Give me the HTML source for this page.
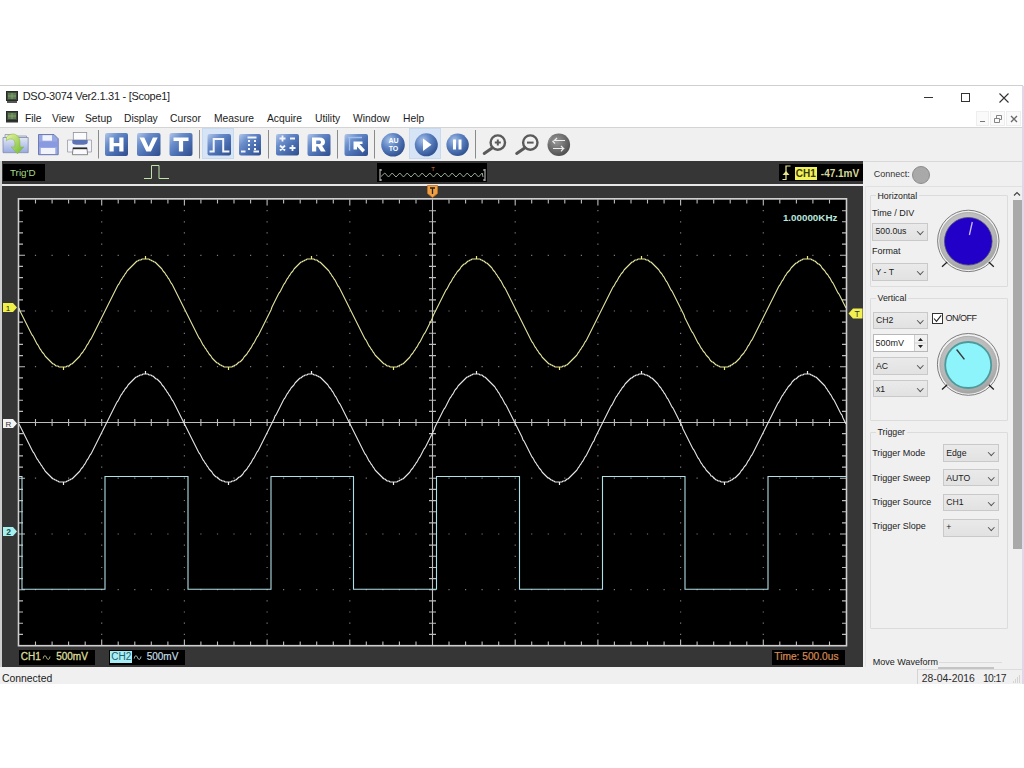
<!DOCTYPE html>
<html><head><meta charset="utf-8">
<style>
*{margin:0;padding:0;box-sizing:border-box}
html,body{width:1024px;height:768px;overflow:hidden;background:#fff;font-family:"Liberation Sans",sans-serif}
.a{position:absolute}
.t{position:absolute;white-space:nowrap;line-height:1}
.menu span{position:absolute;top:114px;font-size:10.3px;color:#1a1a1a;white-space:nowrap;line-height:1}
.combo{position:absolute;background:linear-gradient(#eaeaea,#e2e2e2);border:1px solid #c9c9c9;font-size:8.7px;color:#1a1a1a;line-height:1}
.combo span{position:absolute;left:2.5px;top:3.6px}
.combo i{position:absolute;right:5px;top:5px;width:4.5px;height:4.5px;border-right:1px solid #555;border-bottom:1px solid #555;transform:rotate(45deg)}
.gb{position:absolute;border:1px solid #dcdcdc;border-radius:1px}
.gbl{position:absolute;font-size:8.8px;color:#222;background:#f0f0f0;padding:0 2px;line-height:1}
.lbl{position:absolute;font-size:9px;color:#222;line-height:1;white-space:nowrap}
</style></head><body>
<!-- window frame -->
<div class="a" style="left:0;top:85px;width:1023px;height:1px;background:#cfcfcf"></div>
<div class="a" style="left:1022px;top:86px;width:2px;height:598px;background:#e2d6e8"></div>
<!-- title bar -->
<svg class="a" style="left:6px;top:91px" width="12" height="13" viewBox="0 0 12 13">
<rect x="0.5" y="0.5" width="11" height="9" fill="#3a4a36" stroke="#2a2a2a"/>
<rect x="2" y="2" width="8" height="6" fill="#5d7a50"/>
<path d="M2 5h8M6 2v6" stroke="#8fb080" stroke-width="0.7"/>
<rect x="1" y="10" width="10" height="2" fill="#555"/>
</svg>
<div class="t" style="left:22.7px;top:90.6px;font-size:11px;letter-spacing:-0.28px;color:#1e1e1e">DSO-3074 Ver2.1.31 - [Scope1]</div>
<div class="a" style="left:924px;top:97px;width:9px;height:1px;background:#333"></div>
<div class="a" style="left:961px;top:93px;width:9px;height:9px;border:1px solid #333"></div>
<svg class="a" style="left:999px;top:93px" width="10" height="10" viewBox="0 0 10 10"><path d="M0.5 0.5L9.5 9.5M9.5 0.5L0.5 9.5" stroke="#333" stroke-width="1.1"/></svg>
<!-- menu bar -->
<svg class="a" style="left:6px;top:111px" width="13" height="13" viewBox="0 0 13 13">
<rect x="0.5" y="0.5" width="11" height="9" fill="#3a4a36" stroke="#2a2a2a"/>
<rect x="2" y="2" width="8" height="6" fill="#5d7a50"/>
<path d="M2 5h8M6 2v6" stroke="#8fb080" stroke-width="0.7"/>
<rect x="0" y="10" width="12" height="1.5" fill="#333"/>
</svg>
<div class="menu">
<span style="left:25px">File</span><span style="left:52px">View</span><span style="left:85px">Setup</span><span style="left:124px">Display</span><span style="left:170px">Cursor</span><span style="left:214px">Measure</span><span style="left:267px">Acquire</span><span style="left:315px">Utility</span><span style="left:353px">Window</span><span style="left:403px">Help</span>
</div>
<!-- MDI buttons -->
<div class="a" style="left:976px;top:111px;width:13px;height:15px;background:#fafafa;border:1px solid #eee"></div>
<div class="a" style="left:990px;top:111px;width:15px;height:15px;background:#fafafa;border:1px solid #eee"></div>
<div class="a" style="left:1006px;top:111px;width:15px;height:15px;background:#fafafa;border:1px solid #eee"></div>
<div class="a" style="left:980px;top:120.5px;width:5px;height:1.5px;background:#777"></div>
<svg class="a" style="left:994px;top:115px" width="8" height="8" viewBox="0 0 8 8"><path d="M2.5 0.5h5v4h-2M0.5 3.5h5v4h-5z M2.5 0.5v3" fill="none" stroke="#777" stroke-width="0.9"/></svg>
<svg class="a" style="left:1010px;top:115px" width="8" height="8" viewBox="0 0 8 8"><path d="M1 1L7 7M7 1L1 7" stroke="#6a6a6a" stroke-width="1.4"/></svg>
<div class="a" style="left:0;top:127px;width:1022px;height:1px;background:#d4d4d4"></div>
<!-- toolbar -->
<div class="a" style="left:0;top:128px;width:1022px;height:33px;background:#f0f0f0"></div>
<div class="a" style="left:202px;top:128px;width:32px;height:31px;background:#d6e4f5;border:1px solid #c8daf0"></div>
<div class="a" style="left:409px;top:128px;width:32px;height:31px;background:#d6e4f5;border:1px solid #c8daf0"></div>
<svg class="a" style="left:0;top:128px" width="600" height="33" viewBox="0 128 600 33">
<defs>
<linearGradient id="sq" x1="0" y1="0" x2="1" y2="1">
<stop offset="0" stop-color="#b4c8ea"/><stop offset="0.3" stop-color="#6c8fcc"/><stop offset="0.6" stop-color="#4a6fb2"/><stop offset="1" stop-color="#2f4d8c"/>
</linearGradient>
<radialGradient id="ci" cx="0.35" cy="0.3" r="0.75">
<stop offset="0" stop-color="#a6bfe6"/><stop offset="0.45" stop-color="#5e84c4"/><stop offset="1" stop-color="#2e4f8e"/>
</radialGradient>
<radialGradient id="gc" cx="0.4" cy="0.35" r="0.7">
<stop offset="0" stop-color="#9a9a9a"/><stop offset="0.6" stop-color="#6a6a6a"/><stop offset="1" stop-color="#4a4a4a"/>
</radialGradient>
<linearGradient id="fold" x1="0" y1="0" x2="0" y2="1">
<stop offset="0" stop-color="#e2e8f2"/><stop offset="1" stop-color="#98aae2"/>
</linearGradient>
<linearGradient id="arr" x1="0" y1="0" x2="1" y2="1">
<stop offset="0" stop-color="#e8f5a0"/><stop offset="1" stop-color="#6cb82a"/>
</linearGradient>
</defs>
<!-- open -->
<path d="M5 134.5h8.5l1.5 1.5h11.5v2h-21.5z" fill="#e4e8f0" stroke="#8a94aa" stroke-width="0.8"/>
<path d="M3 137.5h25.2v15.2h-25.2z" fill="url(#fold)" stroke="#7f8cab" stroke-width="0.8"/>
<path d="M6.5 137c3-3.5 9-4.5 12 0c1.2 1.8 1.5 4 1.5 6.5v3.5h3.8l-6.3 6.8l-6.3-6.8h3.7v-3.5c0-2-.6-3.5-2.3-4.2c-2.3-.9-4.6 -.2-6.1 1.5z" fill="url(#arr)" stroke="#86b040" stroke-width="0.5"/>
<!-- save -->
<path d="M38.5 134.5h15.5l4.2 4.2v16h-19.7z" fill="#98a8e4" stroke="#6673a8" stroke-width="0.9"/>
<rect x="42.5" y="135.2" width="9.5" height="5.5" fill="#f0f3fb"/>
<rect x="40.8" y="148" width="14.5" height="6" fill="#f2f4fb"/>
<rect x="39.2" y="141.5" width="18.3" height="5.5" fill="#8a9ae0"/>
<!-- print -->
<path d="M67.5 140h24v12h-24z" fill="#f3f4fa" stroke="#9a9ca6" stroke-width="0.8" rx="1.5"/>
<rect x="73.3" y="132.4" width="13.4" height="7.6" fill="#fbfbfb" stroke="#8e919c" stroke-width="0.8"/>
<path d="M72.3 140h15.4v2.5c0 1.5-2 2.3-7.7 2.3s-7.7-.8-7.7-2.3z" fill="#5c74b6"/>
<path d="M73 148.5h14l0.6 6.2h-15.2z" fill="#fafafc" stroke="#6a6a70" stroke-width="0.8"/>
<path d="M72.8 148.3h14.4" stroke="#2a2a2a" stroke-width="1.8"/>
<!-- separators -->
<path d="M98.5 130v28.5M199.5 130v28.5M268.5 130v28.5M337.5 130v28.5M374.5 130v28.5M475.5 130v28.5" stroke="#8a8a8a" stroke-width="1"/>
<!-- H V T -->
<rect x="105" y="133" width="23" height="23" rx="2" fill="url(#sq)"/>
<path d="M109.5 137.5h4.2v5.6h5.6v-5.6h4.2v14h-4.2v-5.2h-5.6v5.2h-4.2z" fill="#fff"/>
<rect x="137" y="133" width="23.5" height="23" rx="2" fill="url(#sq)"/>
<path d="M139.5 137.5h4.8l4.3 9.5l4.3-9.5h4.8l-6.8 14h-4.6z" fill="#fff"/>
<rect x="169.5" y="133" width="23" height="23" rx="2" fill="url(#sq)"/>
<path d="M173.5 137.5h15v3.6h-5.4v10.4h-4.2v-10.4h-5.4z" fill="#fff"/>
<!-- square wave icons -->
<rect x="207.5" y="134" width="23.5" height="21.5" rx="2" fill="url(#sq)"/>
<path d="M209.5 151.5h4.2v-12.5h9.5v12.5h6.2" fill="none" stroke="#f2f5fb" stroke-width="2"/>
<rect x="239" y="134" width="22" height="21.5" rx="2" fill="url(#sq)"/>
<path d="M241 151.5h4.5M247.5 137.5h9M249 140v2M249 144v2M249 148v2M255 140v2M255 144v2M255 148v2M253.5 151.5h5.5" fill="none" stroke="#f2f5fb" stroke-width="2"/>
<!-- math -->
<rect x="276" y="134" width="23" height="21.5" rx="2" fill="url(#sq)"/>
<path d="M279.5 138.5h6M282.5 135.5v6M290 138.5h5M280 145.5l5 5M285 145.5l-5 5M289.5 148h6M292.5 145v6" fill="none" stroke="#f2f5fb" stroke-width="1.8"/>
<!-- R -->
<rect x="307.5" y="134" width="23" height="22" rx="2" fill="url(#sq)"/>
<path d="M312 137.5h7.5c3.5 0 5.5 1.6 5.5 4.4c0 2-1.1 3.3-2.9 3.9l3.6 5.7h-4.8l-3-5.1h-1.7v5.1h-4.2zM316.2 140.6v3.5h2.9c1.3 0 1.9-.6 1.9-1.75s-.6-1.75-1.9-1.75z" fill="#fff" fill-rule="evenodd"/>
<!-- cursor -->
<rect x="344.5" y="134" width="23.5" height="22" rx="2" fill="url(#sq)"/>
<path d="M348 137.5h14M349.5 137.5v13" stroke="#9fc0ea" stroke-width="1.3"/>
<path d="M353.5 141.5h9v2.5l-3 0l5.5 6l-2.5 2.5l-5.5-6v3h-3.5z" fill="#fff"/>
<!-- auto / play / pause -->
<circle cx="393" cy="144.8" r="11.8" fill="url(#ci)"/>
<text x="393.5" y="143" font-size="7" font-weight="bold" fill="#fff" font-family="Liberation Sans" text-anchor="middle">AU</text>
<text x="393.5" y="150.5" font-size="7" font-weight="bold" fill="#fff" font-family="Liberation Sans" text-anchor="middle">TO</text>
<circle cx="426.3" cy="144.8" r="11.5" fill="url(#ci)"/>
<path d="M423 138.5l8.5 6.3l-8.5 6.3z" fill="#fff"/>
<circle cx="457.6" cy="144.8" r="11.2" fill="url(#ci)"/>
<rect x="453" y="139.5" width="3" height="10" fill="#fff"/><rect x="458.5" y="139.5" width="3" height="10" fill="#fff"/>
<!-- zoom -->
<circle cx="497.8" cy="142.6" r="7.2" fill="#f2f2f2" stroke="#5a5a5a" stroke-width="2.4"/>
<path d="M492.5 147.8l-8.3 5.6" stroke="#5a5a5a" stroke-width="3" stroke-linecap="round"/>
<path d="M494.8 142.6h6M497.8 139.6v6" stroke="#5a5a5a" stroke-width="2"/>
<circle cx="530.3" cy="142.6" r="7.2" fill="#f2f2f2" stroke="#5a5a5a" stroke-width="2.4"/>
<path d="M525 147.8l-8.3 5.6" stroke="#5a5a5a" stroke-width="3" stroke-linecap="round"/>
<path d="M527 142.6h6.6" stroke="#5a5a5a" stroke-width="2"/>
<!-- swap -->
<circle cx="558.8" cy="144.8" r="11.3" fill="url(#gc)"/>
<path d="M547.7 144.8a11.3 11.3 0 0 1 5-9.4l-5 9.4z" fill="#9a9a9a" opacity="0.6"/>
<path d="M565 140.5h-10.5l2.5-2.5M552.5 141l2.5 2.5M553 148.5h10.5l-2.5-2.5M563.5 148.5l-2.5 2.8" fill="none" stroke="#ededed" stroke-width="1.2"/>
</svg>

<!-- scope panel -->
<div class="a" style="left:0;top:161px;width:2px;height:506px;background:#cfcfcf"></div>
<div class="a" style="left:1.5px;top:161px;width:862px;height:506px;background:#363636"></div>
<div class="a" style="left:1.5px;top:183.5px;width:862px;height:2px;background:#e8e8e8"></div>
<div class="a" style="left:19px;top:199.5px;width:827px;height:446px;background:#000"></div>
<!-- top strip -->
<div class="a" style="left:3px;top:164px;width:42px;height:17px;background:#000"></div>
<div class="t" style="left:10px;top:167.5px;font-size:9.8px;color:#a6d88a">Trig'D</div>
<svg class="a" style="left:143px;top:164px" width="28" height="17" viewBox="0 0 28 17"><path d="M1 14.5H8.5V1.5H16V14.5H26" fill="none" stroke="#bfe3a8" stroke-width="1"/></svg>
<div class="a" style="left:377px;top:163px;width:110px;height:19px;background:#000"></div>
<svg class="a" style="left:377px;top:163px" width="110" height="19" viewBox="0 0 110 19">
<path d="M4 13.5L7.8 10L11.5 14L15.2 10L19.0 14L22.8 10L26.5 14L30.2 10L34.0 14L37.8 10L41.5 14L45.2 10L49.0 14L52.8 10L56.5 14L60.2 10L64.0 14L67.8 10L71.5 14L75.2 10L79.0 14L82.8 10L86.5 14L90.2 10L94.0 14L97.8 10L101.5 14L105.2 10L106.0 14" fill="none" stroke="#a8bca0" stroke-width="0.9"/>
<path d="M3 6v12M108 6v12" stroke="#cfcfcf" stroke-width="1"/>
<path d="M3 17h2M106 17h2M3 7h2M106 7h2" stroke="#cfcfcf" stroke-width="1"/>
<text x="56" y="8" font-size="6" fill="#d07a3a" font-family="Liberation Sans" text-anchor="middle">T</text>
</svg>
<div class="a" style="left:779px;top:164px;width:84px;height:17px;background:#000"></div>
<svg class="a" style="left:781px;top:164px" width="12" height="17" viewBox="0 0 12 17"><path d="M1.5 15.5H5V2H9.5" fill="none" stroke="#e6e68a" stroke-width="1.2"/><path d="M1.5 11L5 7l3.5 4z" fill="#e6e68a"/></svg>
<div class="a" style="left:795px;top:167px;width:22px;height:13px;background:#f2f25a"></div>
<div class="t" style="left:795.8px;top:168.5px;font-size:10px;font-weight:bold;color:#3a3a10">CH1</div>
<div class="t" style="left:820.8px;top:168.6px;font-size:10px;font-weight:bold;color:#d6d69c">-47.1mV</div>
<!-- T marker -->
<svg class="a" style="left:427px;top:185px" width="11" height="13" viewBox="0 0 11 13"><path d="M0.5 0.5h10v8l-5 4l-5-4z" fill="#f0a040" stroke="#c07020" stroke-width="0.8"/><path d="M3 3h5M5.5 3v6" stroke="#222" stroke-width="1.3"/></svg>
<!-- scope svg -->
<svg class="a" style="left:0;top:0" width="1024" height="768" viewBox="0 0 1024 768">
<path fill="#7a7a7a" d="M101.1 210.1h1.2v1.2h-1.2zM101.1 221.2h1.2v1.2h-1.2zM101.1 232.3h1.2v1.2h-1.2zM101.1 243.5h1.2v1.2h-1.2zM101.1 254.7h1.2v1.2h-1.2zM101.1 265.8h1.2v1.2h-1.2zM101.1 276.9h1.2v1.2h-1.2zM101.1 288.1h1.2v1.2h-1.2zM101.1 299.2h1.2v1.2h-1.2zM101.1 310.4h1.2v1.2h-1.2zM101.1 321.5h1.2v1.2h-1.2zM101.1 332.7h1.2v1.2h-1.2zM101.1 343.8h1.2v1.2h-1.2zM101.1 355h1.2v1.2h-1.2zM101.1 366.1h1.2v1.2h-1.2zM101.1 377.3h1.2v1.2h-1.2zM101.1 388.4h1.2v1.2h-1.2zM101.1 399.6h1.2v1.2h-1.2zM101.1 410.8h1.2v1.2h-1.2zM101.1 421.9h1.2v1.2h-1.2zM101.1 433h1.2v1.2h-1.2zM101.1 444.2h1.2v1.2h-1.2zM101.1 455.3h1.2v1.2h-1.2zM101.1 466.5h1.2v1.2h-1.2zM101.1 477.6h1.2v1.2h-1.2zM101.1 488.8h1.2v1.2h-1.2zM101.1 499.9h1.2v1.2h-1.2zM101.1 511.1h1.2v1.2h-1.2zM101.1 522.2h1.2v1.2h-1.2zM101.1 533.4h1.2v1.2h-1.2zM101.1 544.5h1.2v1.2h-1.2zM101.1 555.7h1.2v1.2h-1.2zM101.1 566.9h1.2v1.2h-1.2zM101.1 578h1.2v1.2h-1.2zM101.1 589.1h1.2v1.2h-1.2zM101.1 600.3h1.2v1.2h-1.2zM101.1 611.4h1.2v1.2h-1.2zM101.1 622.6h1.2v1.2h-1.2zM101.1 633.8h1.2v1.2h-1.2zM183.8 210.1h1.2v1.2h-1.2zM183.8 221.2h1.2v1.2h-1.2zM183.8 232.3h1.2v1.2h-1.2zM183.8 243.5h1.2v1.2h-1.2zM183.8 254.7h1.2v1.2h-1.2zM183.8 265.8h1.2v1.2h-1.2zM183.8 276.9h1.2v1.2h-1.2zM183.8 288.1h1.2v1.2h-1.2zM183.8 299.2h1.2v1.2h-1.2zM183.8 310.4h1.2v1.2h-1.2zM183.8 321.5h1.2v1.2h-1.2zM183.8 332.7h1.2v1.2h-1.2zM183.8 343.8h1.2v1.2h-1.2zM183.8 355h1.2v1.2h-1.2zM183.8 366.1h1.2v1.2h-1.2zM183.8 377.3h1.2v1.2h-1.2zM183.8 388.4h1.2v1.2h-1.2zM183.8 399.6h1.2v1.2h-1.2zM183.8 410.8h1.2v1.2h-1.2zM183.8 421.9h1.2v1.2h-1.2zM183.8 433h1.2v1.2h-1.2zM183.8 444.2h1.2v1.2h-1.2zM183.8 455.3h1.2v1.2h-1.2zM183.8 466.5h1.2v1.2h-1.2zM183.8 477.6h1.2v1.2h-1.2zM183.8 488.8h1.2v1.2h-1.2zM183.8 499.9h1.2v1.2h-1.2zM183.8 511.1h1.2v1.2h-1.2zM183.8 522.2h1.2v1.2h-1.2zM183.8 533.4h1.2v1.2h-1.2zM183.8 544.5h1.2v1.2h-1.2zM183.8 555.7h1.2v1.2h-1.2zM183.8 566.9h1.2v1.2h-1.2zM183.8 578h1.2v1.2h-1.2zM183.8 589.1h1.2v1.2h-1.2zM183.8 600.3h1.2v1.2h-1.2zM183.8 611.4h1.2v1.2h-1.2zM183.8 622.6h1.2v1.2h-1.2zM183.8 633.8h1.2v1.2h-1.2zM266.5 210.1h1.2v1.2h-1.2zM266.5 221.2h1.2v1.2h-1.2zM266.5 232.3h1.2v1.2h-1.2zM266.5 243.5h1.2v1.2h-1.2zM266.5 254.7h1.2v1.2h-1.2zM266.5 265.8h1.2v1.2h-1.2zM266.5 276.9h1.2v1.2h-1.2zM266.5 288.1h1.2v1.2h-1.2zM266.5 299.2h1.2v1.2h-1.2zM266.5 310.4h1.2v1.2h-1.2zM266.5 321.5h1.2v1.2h-1.2zM266.5 332.7h1.2v1.2h-1.2zM266.5 343.8h1.2v1.2h-1.2zM266.5 355h1.2v1.2h-1.2zM266.5 366.1h1.2v1.2h-1.2zM266.5 377.3h1.2v1.2h-1.2zM266.5 388.4h1.2v1.2h-1.2zM266.5 399.6h1.2v1.2h-1.2zM266.5 410.8h1.2v1.2h-1.2zM266.5 421.9h1.2v1.2h-1.2zM266.5 433h1.2v1.2h-1.2zM266.5 444.2h1.2v1.2h-1.2zM266.5 455.3h1.2v1.2h-1.2zM266.5 466.5h1.2v1.2h-1.2zM266.5 477.6h1.2v1.2h-1.2zM266.5 488.8h1.2v1.2h-1.2zM266.5 499.9h1.2v1.2h-1.2zM266.5 511.1h1.2v1.2h-1.2zM266.5 522.2h1.2v1.2h-1.2zM266.5 533.4h1.2v1.2h-1.2zM266.5 544.5h1.2v1.2h-1.2zM266.5 555.7h1.2v1.2h-1.2zM266.5 566.9h1.2v1.2h-1.2zM266.5 578h1.2v1.2h-1.2zM266.5 589.1h1.2v1.2h-1.2zM266.5 600.3h1.2v1.2h-1.2zM266.5 611.4h1.2v1.2h-1.2zM266.5 622.6h1.2v1.2h-1.2zM266.5 633.8h1.2v1.2h-1.2zM349.2 210.1h1.2v1.2h-1.2zM349.2 221.2h1.2v1.2h-1.2zM349.2 232.3h1.2v1.2h-1.2zM349.2 243.5h1.2v1.2h-1.2zM349.2 254.7h1.2v1.2h-1.2zM349.2 265.8h1.2v1.2h-1.2zM349.2 276.9h1.2v1.2h-1.2zM349.2 288.1h1.2v1.2h-1.2zM349.2 299.2h1.2v1.2h-1.2zM349.2 310.4h1.2v1.2h-1.2zM349.2 321.5h1.2v1.2h-1.2zM349.2 332.7h1.2v1.2h-1.2zM349.2 343.8h1.2v1.2h-1.2zM349.2 355h1.2v1.2h-1.2zM349.2 366.1h1.2v1.2h-1.2zM349.2 377.3h1.2v1.2h-1.2zM349.2 388.4h1.2v1.2h-1.2zM349.2 399.6h1.2v1.2h-1.2zM349.2 410.8h1.2v1.2h-1.2zM349.2 421.9h1.2v1.2h-1.2zM349.2 433h1.2v1.2h-1.2zM349.2 444.2h1.2v1.2h-1.2zM349.2 455.3h1.2v1.2h-1.2zM349.2 466.5h1.2v1.2h-1.2zM349.2 477.6h1.2v1.2h-1.2zM349.2 488.8h1.2v1.2h-1.2zM349.2 499.9h1.2v1.2h-1.2zM349.2 511.1h1.2v1.2h-1.2zM349.2 522.2h1.2v1.2h-1.2zM349.2 533.4h1.2v1.2h-1.2zM349.2 544.5h1.2v1.2h-1.2zM349.2 555.7h1.2v1.2h-1.2zM349.2 566.9h1.2v1.2h-1.2zM349.2 578h1.2v1.2h-1.2zM349.2 589.1h1.2v1.2h-1.2zM349.2 600.3h1.2v1.2h-1.2zM349.2 611.4h1.2v1.2h-1.2zM349.2 622.6h1.2v1.2h-1.2zM349.2 633.8h1.2v1.2h-1.2zM514.6 210.1h1.2v1.2h-1.2zM514.6 221.2h1.2v1.2h-1.2zM514.6 232.3h1.2v1.2h-1.2zM514.6 243.5h1.2v1.2h-1.2zM514.6 254.7h1.2v1.2h-1.2zM514.6 265.8h1.2v1.2h-1.2zM514.6 276.9h1.2v1.2h-1.2zM514.6 288.1h1.2v1.2h-1.2zM514.6 299.2h1.2v1.2h-1.2zM514.6 310.4h1.2v1.2h-1.2zM514.6 321.5h1.2v1.2h-1.2zM514.6 332.7h1.2v1.2h-1.2zM514.6 343.8h1.2v1.2h-1.2zM514.6 355h1.2v1.2h-1.2zM514.6 366.1h1.2v1.2h-1.2zM514.6 377.3h1.2v1.2h-1.2zM514.6 388.4h1.2v1.2h-1.2zM514.6 399.6h1.2v1.2h-1.2zM514.6 410.8h1.2v1.2h-1.2zM514.6 421.9h1.2v1.2h-1.2zM514.6 433h1.2v1.2h-1.2zM514.6 444.2h1.2v1.2h-1.2zM514.6 455.3h1.2v1.2h-1.2zM514.6 466.5h1.2v1.2h-1.2zM514.6 477.6h1.2v1.2h-1.2zM514.6 488.8h1.2v1.2h-1.2zM514.6 499.9h1.2v1.2h-1.2zM514.6 511.1h1.2v1.2h-1.2zM514.6 522.2h1.2v1.2h-1.2zM514.6 533.4h1.2v1.2h-1.2zM514.6 544.5h1.2v1.2h-1.2zM514.6 555.7h1.2v1.2h-1.2zM514.6 566.9h1.2v1.2h-1.2zM514.6 578h1.2v1.2h-1.2zM514.6 589.1h1.2v1.2h-1.2zM514.6 600.3h1.2v1.2h-1.2zM514.6 611.4h1.2v1.2h-1.2zM514.6 622.6h1.2v1.2h-1.2zM514.6 633.8h1.2v1.2h-1.2zM597.3 210.1h1.2v1.2h-1.2zM597.3 221.2h1.2v1.2h-1.2zM597.3 232.3h1.2v1.2h-1.2zM597.3 243.5h1.2v1.2h-1.2zM597.3 254.7h1.2v1.2h-1.2zM597.3 265.8h1.2v1.2h-1.2zM597.3 276.9h1.2v1.2h-1.2zM597.3 288.1h1.2v1.2h-1.2zM597.3 299.2h1.2v1.2h-1.2zM597.3 310.4h1.2v1.2h-1.2zM597.3 321.5h1.2v1.2h-1.2zM597.3 332.7h1.2v1.2h-1.2zM597.3 343.8h1.2v1.2h-1.2zM597.3 355h1.2v1.2h-1.2zM597.3 366.1h1.2v1.2h-1.2zM597.3 377.3h1.2v1.2h-1.2zM597.3 388.4h1.2v1.2h-1.2zM597.3 399.6h1.2v1.2h-1.2zM597.3 410.8h1.2v1.2h-1.2zM597.3 421.9h1.2v1.2h-1.2zM597.3 433h1.2v1.2h-1.2zM597.3 444.2h1.2v1.2h-1.2zM597.3 455.3h1.2v1.2h-1.2zM597.3 466.5h1.2v1.2h-1.2zM597.3 477.6h1.2v1.2h-1.2zM597.3 488.8h1.2v1.2h-1.2zM597.3 499.9h1.2v1.2h-1.2zM597.3 511.1h1.2v1.2h-1.2zM597.3 522.2h1.2v1.2h-1.2zM597.3 533.4h1.2v1.2h-1.2zM597.3 544.5h1.2v1.2h-1.2zM597.3 555.7h1.2v1.2h-1.2zM597.3 566.9h1.2v1.2h-1.2zM597.3 578h1.2v1.2h-1.2zM597.3 589.1h1.2v1.2h-1.2zM597.3 600.3h1.2v1.2h-1.2zM597.3 611.4h1.2v1.2h-1.2zM597.3 622.6h1.2v1.2h-1.2zM597.3 633.8h1.2v1.2h-1.2zM680 210.1h1.2v1.2h-1.2zM680 221.2h1.2v1.2h-1.2zM680 232.3h1.2v1.2h-1.2zM680 243.5h1.2v1.2h-1.2zM680 254.7h1.2v1.2h-1.2zM680 265.8h1.2v1.2h-1.2zM680 276.9h1.2v1.2h-1.2zM680 288.1h1.2v1.2h-1.2zM680 299.2h1.2v1.2h-1.2zM680 310.4h1.2v1.2h-1.2zM680 321.5h1.2v1.2h-1.2zM680 332.7h1.2v1.2h-1.2zM680 343.8h1.2v1.2h-1.2zM680 355h1.2v1.2h-1.2zM680 366.1h1.2v1.2h-1.2zM680 377.3h1.2v1.2h-1.2zM680 388.4h1.2v1.2h-1.2zM680 399.6h1.2v1.2h-1.2zM680 410.8h1.2v1.2h-1.2zM680 421.9h1.2v1.2h-1.2zM680 433h1.2v1.2h-1.2zM680 444.2h1.2v1.2h-1.2zM680 455.3h1.2v1.2h-1.2zM680 466.5h1.2v1.2h-1.2zM680 477.6h1.2v1.2h-1.2zM680 488.8h1.2v1.2h-1.2zM680 499.9h1.2v1.2h-1.2zM680 511.1h1.2v1.2h-1.2zM680 522.2h1.2v1.2h-1.2zM680 533.4h1.2v1.2h-1.2zM680 544.5h1.2v1.2h-1.2zM680 555.7h1.2v1.2h-1.2zM680 566.9h1.2v1.2h-1.2zM680 578h1.2v1.2h-1.2zM680 589.1h1.2v1.2h-1.2zM680 600.3h1.2v1.2h-1.2zM680 611.4h1.2v1.2h-1.2zM680 622.6h1.2v1.2h-1.2zM680 633.8h1.2v1.2h-1.2zM762.7 210.1h1.2v1.2h-1.2zM762.7 221.2h1.2v1.2h-1.2zM762.7 232.3h1.2v1.2h-1.2zM762.7 243.5h1.2v1.2h-1.2zM762.7 254.7h1.2v1.2h-1.2zM762.7 265.8h1.2v1.2h-1.2zM762.7 276.9h1.2v1.2h-1.2zM762.7 288.1h1.2v1.2h-1.2zM762.7 299.2h1.2v1.2h-1.2zM762.7 310.4h1.2v1.2h-1.2zM762.7 321.5h1.2v1.2h-1.2zM762.7 332.7h1.2v1.2h-1.2zM762.7 343.8h1.2v1.2h-1.2zM762.7 355h1.2v1.2h-1.2zM762.7 366.1h1.2v1.2h-1.2zM762.7 377.3h1.2v1.2h-1.2zM762.7 388.4h1.2v1.2h-1.2zM762.7 399.6h1.2v1.2h-1.2zM762.7 410.8h1.2v1.2h-1.2zM762.7 421.9h1.2v1.2h-1.2zM762.7 433h1.2v1.2h-1.2zM762.7 444.2h1.2v1.2h-1.2zM762.7 455.3h1.2v1.2h-1.2zM762.7 466.5h1.2v1.2h-1.2zM762.7 477.6h1.2v1.2h-1.2zM762.7 488.8h1.2v1.2h-1.2zM762.7 499.9h1.2v1.2h-1.2zM762.7 511.1h1.2v1.2h-1.2zM762.7 522.2h1.2v1.2h-1.2zM762.7 533.4h1.2v1.2h-1.2zM762.7 544.5h1.2v1.2h-1.2zM762.7 555.7h1.2v1.2h-1.2zM762.7 566.9h1.2v1.2h-1.2zM762.7 578h1.2v1.2h-1.2zM762.7 589.1h1.2v1.2h-1.2zM762.7 600.3h1.2v1.2h-1.2zM762.7 611.4h1.2v1.2h-1.2zM762.7 622.6h1.2v1.2h-1.2zM762.7 633.8h1.2v1.2h-1.2zM34.9 254.7h1.2v1.2h-1.2zM51.5 254.7h1.2v1.2h-1.2zM68 254.7h1.2v1.2h-1.2zM84.6 254.7h1.2v1.2h-1.2zM101.1 254.7h1.2v1.2h-1.2zM117.6 254.7h1.2v1.2h-1.2zM134.2 254.7h1.2v1.2h-1.2zM150.7 254.7h1.2v1.2h-1.2zM167.3 254.7h1.2v1.2h-1.2zM183.8 254.7h1.2v1.2h-1.2zM200.3 254.7h1.2v1.2h-1.2zM216.9 254.7h1.2v1.2h-1.2zM233.4 254.7h1.2v1.2h-1.2zM250 254.7h1.2v1.2h-1.2zM266.5 254.7h1.2v1.2h-1.2zM283 254.7h1.2v1.2h-1.2zM299.6 254.7h1.2v1.2h-1.2zM316.1 254.7h1.2v1.2h-1.2zM332.7 254.7h1.2v1.2h-1.2zM349.2 254.7h1.2v1.2h-1.2zM365.7 254.7h1.2v1.2h-1.2zM382.3 254.7h1.2v1.2h-1.2zM398.8 254.7h1.2v1.2h-1.2zM415.4 254.7h1.2v1.2h-1.2zM431.9 254.7h1.2v1.2h-1.2zM448.4 254.7h1.2v1.2h-1.2zM465 254.7h1.2v1.2h-1.2zM481.5 254.7h1.2v1.2h-1.2zM498.1 254.7h1.2v1.2h-1.2zM514.6 254.7h1.2v1.2h-1.2zM531.1 254.7h1.2v1.2h-1.2zM547.7 254.7h1.2v1.2h-1.2zM564.2 254.7h1.2v1.2h-1.2zM580.8 254.7h1.2v1.2h-1.2zM597.3 254.7h1.2v1.2h-1.2zM613.8 254.7h1.2v1.2h-1.2zM630.4 254.7h1.2v1.2h-1.2zM646.9 254.7h1.2v1.2h-1.2zM663.5 254.7h1.2v1.2h-1.2zM680 254.7h1.2v1.2h-1.2zM696.5 254.7h1.2v1.2h-1.2zM713.1 254.7h1.2v1.2h-1.2zM729.6 254.7h1.2v1.2h-1.2zM746.2 254.7h1.2v1.2h-1.2zM762.7 254.7h1.2v1.2h-1.2zM779.2 254.7h1.2v1.2h-1.2zM795.8 254.7h1.2v1.2h-1.2zM812.3 254.7h1.2v1.2h-1.2zM828.9 254.7h1.2v1.2h-1.2zM34.9 310.4h1.2v1.2h-1.2zM51.5 310.4h1.2v1.2h-1.2zM68 310.4h1.2v1.2h-1.2zM84.6 310.4h1.2v1.2h-1.2zM101.1 310.4h1.2v1.2h-1.2zM117.6 310.4h1.2v1.2h-1.2zM134.2 310.4h1.2v1.2h-1.2zM150.7 310.4h1.2v1.2h-1.2zM167.3 310.4h1.2v1.2h-1.2zM183.8 310.4h1.2v1.2h-1.2zM200.3 310.4h1.2v1.2h-1.2zM216.9 310.4h1.2v1.2h-1.2zM233.4 310.4h1.2v1.2h-1.2zM250 310.4h1.2v1.2h-1.2zM266.5 310.4h1.2v1.2h-1.2zM283 310.4h1.2v1.2h-1.2zM299.6 310.4h1.2v1.2h-1.2zM316.1 310.4h1.2v1.2h-1.2zM332.7 310.4h1.2v1.2h-1.2zM349.2 310.4h1.2v1.2h-1.2zM365.7 310.4h1.2v1.2h-1.2zM382.3 310.4h1.2v1.2h-1.2zM398.8 310.4h1.2v1.2h-1.2zM415.4 310.4h1.2v1.2h-1.2zM431.9 310.4h1.2v1.2h-1.2zM448.4 310.4h1.2v1.2h-1.2zM465 310.4h1.2v1.2h-1.2zM481.5 310.4h1.2v1.2h-1.2zM498.1 310.4h1.2v1.2h-1.2zM514.6 310.4h1.2v1.2h-1.2zM531.1 310.4h1.2v1.2h-1.2zM547.7 310.4h1.2v1.2h-1.2zM564.2 310.4h1.2v1.2h-1.2zM580.8 310.4h1.2v1.2h-1.2zM597.3 310.4h1.2v1.2h-1.2zM613.8 310.4h1.2v1.2h-1.2zM630.4 310.4h1.2v1.2h-1.2zM646.9 310.4h1.2v1.2h-1.2zM663.5 310.4h1.2v1.2h-1.2zM680 310.4h1.2v1.2h-1.2zM696.5 310.4h1.2v1.2h-1.2zM713.1 310.4h1.2v1.2h-1.2zM729.6 310.4h1.2v1.2h-1.2zM746.2 310.4h1.2v1.2h-1.2zM762.7 310.4h1.2v1.2h-1.2zM779.2 310.4h1.2v1.2h-1.2zM795.8 310.4h1.2v1.2h-1.2zM812.3 310.4h1.2v1.2h-1.2zM828.9 310.4h1.2v1.2h-1.2zM34.9 366.1h1.2v1.2h-1.2zM51.5 366.1h1.2v1.2h-1.2zM68 366.1h1.2v1.2h-1.2zM84.6 366.1h1.2v1.2h-1.2zM101.1 366.1h1.2v1.2h-1.2zM117.6 366.1h1.2v1.2h-1.2zM134.2 366.1h1.2v1.2h-1.2zM150.7 366.1h1.2v1.2h-1.2zM167.3 366.1h1.2v1.2h-1.2zM183.8 366.1h1.2v1.2h-1.2zM200.3 366.1h1.2v1.2h-1.2zM216.9 366.1h1.2v1.2h-1.2zM233.4 366.1h1.2v1.2h-1.2zM250 366.1h1.2v1.2h-1.2zM266.5 366.1h1.2v1.2h-1.2zM283 366.1h1.2v1.2h-1.2zM299.6 366.1h1.2v1.2h-1.2zM316.1 366.1h1.2v1.2h-1.2zM332.7 366.1h1.2v1.2h-1.2zM349.2 366.1h1.2v1.2h-1.2zM365.7 366.1h1.2v1.2h-1.2zM382.3 366.1h1.2v1.2h-1.2zM398.8 366.1h1.2v1.2h-1.2zM415.4 366.1h1.2v1.2h-1.2zM431.9 366.1h1.2v1.2h-1.2zM448.4 366.1h1.2v1.2h-1.2zM465 366.1h1.2v1.2h-1.2zM481.5 366.1h1.2v1.2h-1.2zM498.1 366.1h1.2v1.2h-1.2zM514.6 366.1h1.2v1.2h-1.2zM531.1 366.1h1.2v1.2h-1.2zM547.7 366.1h1.2v1.2h-1.2zM564.2 366.1h1.2v1.2h-1.2zM580.8 366.1h1.2v1.2h-1.2zM597.3 366.1h1.2v1.2h-1.2zM613.8 366.1h1.2v1.2h-1.2zM630.4 366.1h1.2v1.2h-1.2zM646.9 366.1h1.2v1.2h-1.2zM663.5 366.1h1.2v1.2h-1.2zM680 366.1h1.2v1.2h-1.2zM696.5 366.1h1.2v1.2h-1.2zM713.1 366.1h1.2v1.2h-1.2zM729.6 366.1h1.2v1.2h-1.2zM746.2 366.1h1.2v1.2h-1.2zM762.7 366.1h1.2v1.2h-1.2zM779.2 366.1h1.2v1.2h-1.2zM795.8 366.1h1.2v1.2h-1.2zM812.3 366.1h1.2v1.2h-1.2zM828.9 366.1h1.2v1.2h-1.2zM34.9 477.6h1.2v1.2h-1.2zM51.5 477.6h1.2v1.2h-1.2zM68 477.6h1.2v1.2h-1.2zM84.6 477.6h1.2v1.2h-1.2zM101.1 477.6h1.2v1.2h-1.2zM117.6 477.6h1.2v1.2h-1.2zM134.2 477.6h1.2v1.2h-1.2zM150.7 477.6h1.2v1.2h-1.2zM167.3 477.6h1.2v1.2h-1.2zM183.8 477.6h1.2v1.2h-1.2zM200.3 477.6h1.2v1.2h-1.2zM216.9 477.6h1.2v1.2h-1.2zM233.4 477.6h1.2v1.2h-1.2zM250 477.6h1.2v1.2h-1.2zM266.5 477.6h1.2v1.2h-1.2zM283 477.6h1.2v1.2h-1.2zM299.6 477.6h1.2v1.2h-1.2zM316.1 477.6h1.2v1.2h-1.2zM332.7 477.6h1.2v1.2h-1.2zM349.2 477.6h1.2v1.2h-1.2zM365.7 477.6h1.2v1.2h-1.2zM382.3 477.6h1.2v1.2h-1.2zM398.8 477.6h1.2v1.2h-1.2zM415.4 477.6h1.2v1.2h-1.2zM431.9 477.6h1.2v1.2h-1.2zM448.4 477.6h1.2v1.2h-1.2zM465 477.6h1.2v1.2h-1.2zM481.5 477.6h1.2v1.2h-1.2zM498.1 477.6h1.2v1.2h-1.2zM514.6 477.6h1.2v1.2h-1.2zM531.1 477.6h1.2v1.2h-1.2zM547.7 477.6h1.2v1.2h-1.2zM564.2 477.6h1.2v1.2h-1.2zM580.8 477.6h1.2v1.2h-1.2zM597.3 477.6h1.2v1.2h-1.2zM613.8 477.6h1.2v1.2h-1.2zM630.4 477.6h1.2v1.2h-1.2zM646.9 477.6h1.2v1.2h-1.2zM663.5 477.6h1.2v1.2h-1.2zM680 477.6h1.2v1.2h-1.2zM696.5 477.6h1.2v1.2h-1.2zM713.1 477.6h1.2v1.2h-1.2zM729.6 477.6h1.2v1.2h-1.2zM746.2 477.6h1.2v1.2h-1.2zM762.7 477.6h1.2v1.2h-1.2zM779.2 477.6h1.2v1.2h-1.2zM795.8 477.6h1.2v1.2h-1.2zM812.3 477.6h1.2v1.2h-1.2zM828.9 477.6h1.2v1.2h-1.2zM34.9 533.4h1.2v1.2h-1.2zM51.5 533.4h1.2v1.2h-1.2zM68 533.4h1.2v1.2h-1.2zM84.6 533.4h1.2v1.2h-1.2zM101.1 533.4h1.2v1.2h-1.2zM117.6 533.4h1.2v1.2h-1.2zM134.2 533.4h1.2v1.2h-1.2zM150.7 533.4h1.2v1.2h-1.2zM167.3 533.4h1.2v1.2h-1.2zM183.8 533.4h1.2v1.2h-1.2zM200.3 533.4h1.2v1.2h-1.2zM216.9 533.4h1.2v1.2h-1.2zM233.4 533.4h1.2v1.2h-1.2zM250 533.4h1.2v1.2h-1.2zM266.5 533.4h1.2v1.2h-1.2zM283 533.4h1.2v1.2h-1.2zM299.6 533.4h1.2v1.2h-1.2zM316.1 533.4h1.2v1.2h-1.2zM332.7 533.4h1.2v1.2h-1.2zM349.2 533.4h1.2v1.2h-1.2zM365.7 533.4h1.2v1.2h-1.2zM382.3 533.4h1.2v1.2h-1.2zM398.8 533.4h1.2v1.2h-1.2zM415.4 533.4h1.2v1.2h-1.2zM431.9 533.4h1.2v1.2h-1.2zM448.4 533.4h1.2v1.2h-1.2zM465 533.4h1.2v1.2h-1.2zM481.5 533.4h1.2v1.2h-1.2zM498.1 533.4h1.2v1.2h-1.2zM514.6 533.4h1.2v1.2h-1.2zM531.1 533.4h1.2v1.2h-1.2zM547.7 533.4h1.2v1.2h-1.2zM564.2 533.4h1.2v1.2h-1.2zM580.8 533.4h1.2v1.2h-1.2zM597.3 533.4h1.2v1.2h-1.2zM613.8 533.4h1.2v1.2h-1.2zM630.4 533.4h1.2v1.2h-1.2zM646.9 533.4h1.2v1.2h-1.2zM663.5 533.4h1.2v1.2h-1.2zM680 533.4h1.2v1.2h-1.2zM696.5 533.4h1.2v1.2h-1.2zM713.1 533.4h1.2v1.2h-1.2zM729.6 533.4h1.2v1.2h-1.2zM746.2 533.4h1.2v1.2h-1.2zM762.7 533.4h1.2v1.2h-1.2zM779.2 533.4h1.2v1.2h-1.2zM795.8 533.4h1.2v1.2h-1.2zM812.3 533.4h1.2v1.2h-1.2zM828.9 533.4h1.2v1.2h-1.2zM34.9 589.1h1.2v1.2h-1.2zM51.5 589.1h1.2v1.2h-1.2zM68 589.1h1.2v1.2h-1.2zM84.6 589.1h1.2v1.2h-1.2zM101.1 589.1h1.2v1.2h-1.2zM117.6 589.1h1.2v1.2h-1.2zM134.2 589.1h1.2v1.2h-1.2zM150.7 589.1h1.2v1.2h-1.2zM167.3 589.1h1.2v1.2h-1.2zM183.8 589.1h1.2v1.2h-1.2zM200.3 589.1h1.2v1.2h-1.2zM216.9 589.1h1.2v1.2h-1.2zM233.4 589.1h1.2v1.2h-1.2zM250 589.1h1.2v1.2h-1.2zM266.5 589.1h1.2v1.2h-1.2zM283 589.1h1.2v1.2h-1.2zM299.6 589.1h1.2v1.2h-1.2zM316.1 589.1h1.2v1.2h-1.2zM332.7 589.1h1.2v1.2h-1.2zM349.2 589.1h1.2v1.2h-1.2zM365.7 589.1h1.2v1.2h-1.2zM382.3 589.1h1.2v1.2h-1.2zM398.8 589.1h1.2v1.2h-1.2zM415.4 589.1h1.2v1.2h-1.2zM431.9 589.1h1.2v1.2h-1.2zM448.4 589.1h1.2v1.2h-1.2zM465 589.1h1.2v1.2h-1.2zM481.5 589.1h1.2v1.2h-1.2zM498.1 589.1h1.2v1.2h-1.2zM514.6 589.1h1.2v1.2h-1.2zM531.1 589.1h1.2v1.2h-1.2zM547.7 589.1h1.2v1.2h-1.2zM564.2 589.1h1.2v1.2h-1.2zM580.8 589.1h1.2v1.2h-1.2zM597.3 589.1h1.2v1.2h-1.2zM613.8 589.1h1.2v1.2h-1.2zM630.4 589.1h1.2v1.2h-1.2zM646.9 589.1h1.2v1.2h-1.2zM663.5 589.1h1.2v1.2h-1.2zM680 589.1h1.2v1.2h-1.2zM696.5 589.1h1.2v1.2h-1.2zM713.1 589.1h1.2v1.2h-1.2zM729.6 589.1h1.2v1.2h-1.2zM746.2 589.1h1.2v1.2h-1.2zM762.7 589.1h1.2v1.2h-1.2zM779.2 589.1h1.2v1.2h-1.2zM795.8 589.1h1.2v1.2h-1.2zM812.3 589.1h1.2v1.2h-1.2zM828.9 589.1h1.2v1.2h-1.2z"/>
<path stroke="#bdbdbd" stroke-width="1.1" fill="none" d="M19 422.5H846M432.5 199.5V645.5M35.5 419v3.5M35.5 422.5v3.5M35.5 199.5v4M35.5 645.5v-4M52.1 419v3.5M52.1 422.5v3.5M52.1 199.5v4M52.1 645.5v-4M68.6 419v3.5M68.6 422.5v3.5M68.6 199.5v4M68.6 645.5v-4M85.2 419v3.5M85.2 422.5v3.5M85.2 199.5v4M85.2 645.5v-4M101.7 419v3.5M101.7 422.5v3.5M101.7 199.5v6M101.7 645.5v-6M118.2 419v3.5M118.2 422.5v3.5M118.2 199.5v4M118.2 645.5v-4M134.8 419v3.5M134.8 422.5v3.5M134.8 199.5v4M134.8 645.5v-4M151.3 419v3.5M151.3 422.5v3.5M151.3 199.5v4M151.3 645.5v-4M167.9 419v3.5M167.9 422.5v3.5M167.9 199.5v4M167.9 645.5v-4M184.4 419v3.5M184.4 422.5v3.5M184.4 199.5v6M184.4 645.5v-6M200.9 419v3.5M200.9 422.5v3.5M200.9 199.5v4M200.9 645.5v-4M217.5 419v3.5M217.5 422.5v3.5M217.5 199.5v4M217.5 645.5v-4M234 419v3.5M234 422.5v3.5M234 199.5v4M234 645.5v-4M250.6 419v3.5M250.6 422.5v3.5M250.6 199.5v4M250.6 645.5v-4M267.1 419v3.5M267.1 422.5v3.5M267.1 199.5v6M267.1 645.5v-6M283.6 419v3.5M283.6 422.5v3.5M283.6 199.5v4M283.6 645.5v-4M300.2 419v3.5M300.2 422.5v3.5M300.2 199.5v4M300.2 645.5v-4M316.7 419v3.5M316.7 422.5v3.5M316.7 199.5v4M316.7 645.5v-4M333.3 419v3.5M333.3 422.5v3.5M333.3 199.5v4M333.3 645.5v-4M349.8 419v3.5M349.8 422.5v3.5M349.8 199.5v6M349.8 645.5v-6M366.3 419v3.5M366.3 422.5v3.5M366.3 199.5v4M366.3 645.5v-4M382.9 419v3.5M382.9 422.5v3.5M382.9 199.5v4M382.9 645.5v-4M399.4 419v3.5M399.4 422.5v3.5M399.4 199.5v4M399.4 645.5v-4M416 419v3.5M416 422.5v3.5M416 199.5v4M416 645.5v-4M432.5 419v3.5M432.5 422.5v3.5M432.5 199.5v6M432.5 645.5v-6M449 419v3.5M449 422.5v3.5M449 199.5v4M449 645.5v-4M465.6 419v3.5M465.6 422.5v3.5M465.6 199.5v4M465.6 645.5v-4M482.1 419v3.5M482.1 422.5v3.5M482.1 199.5v4M482.1 645.5v-4M498.7 419v3.5M498.7 422.5v3.5M498.7 199.5v4M498.7 645.5v-4M515.2 419v3.5M515.2 422.5v3.5M515.2 199.5v6M515.2 645.5v-6M531.7 419v3.5M531.7 422.5v3.5M531.7 199.5v4M531.7 645.5v-4M548.3 419v3.5M548.3 422.5v3.5M548.3 199.5v4M548.3 645.5v-4M564.8 419v3.5M564.8 422.5v3.5M564.8 199.5v4M564.8 645.5v-4M581.4 419v3.5M581.4 422.5v3.5M581.4 199.5v4M581.4 645.5v-4M597.9 419v3.5M597.9 422.5v3.5M597.9 199.5v6M597.9 645.5v-6M614.4 419v3.5M614.4 422.5v3.5M614.4 199.5v4M614.4 645.5v-4M631 419v3.5M631 422.5v3.5M631 199.5v4M631 645.5v-4M647.5 419v3.5M647.5 422.5v3.5M647.5 199.5v4M647.5 645.5v-4M664.1 419v3.5M664.1 422.5v3.5M664.1 199.5v4M664.1 645.5v-4M680.6 419v3.5M680.6 422.5v3.5M680.6 199.5v6M680.6 645.5v-6M697.1 419v3.5M697.1 422.5v3.5M697.1 199.5v4M697.1 645.5v-4M713.7 419v3.5M713.7 422.5v3.5M713.7 199.5v4M713.7 645.5v-4M730.2 419v3.5M730.2 422.5v3.5M730.2 199.5v4M730.2 645.5v-4M746.8 419v3.5M746.8 422.5v3.5M746.8 199.5v4M746.8 645.5v-4M763.3 419v3.5M763.3 422.5v3.5M763.3 199.5v6M763.3 645.5v-6M779.8 419v3.5M779.8 422.5v3.5M779.8 199.5v4M779.8 645.5v-4M796.4 419v3.5M796.4 422.5v3.5M796.4 199.5v4M796.4 645.5v-4M812.9 419v3.5M812.9 422.5v3.5M812.9 199.5v4M812.9 645.5v-4M829.5 419v3.5M829.5 422.5v3.5M829.5 199.5v4M829.5 645.5v-4M429 210.7h7M19 210.7h4M846 210.7h-4M429 221.8h7M19 221.8h4M846 221.8h-4M429 232.9h7M19 232.9h4M846 232.9h-4M429 244.1h7M19 244.1h4M846 244.1h-4M429 255.2h7M19 255.2h6M846 255.2h-6M429 266.4h7M19 266.4h4M846 266.4h-4M429 277.6h7M19 277.6h4M846 277.6h-4M429 288.7h7M19 288.7h4M846 288.7h-4M429 299.9h7M19 299.9h4M846 299.9h-4M429 311h7M19 311h6M846 311h-6M429 322.1h7M19 322.1h4M846 322.1h-4M429 333.3h7M19 333.3h4M846 333.3h-4M429 344.4h7M19 344.4h4M846 344.4h-4M429 355.6h7M19 355.6h4M846 355.6h-4M429 366.8h7M19 366.8h6M846 366.8h-6M429 377.9h7M19 377.9h4M846 377.9h-4M429 389.1h7M19 389.1h4M846 389.1h-4M429 400.2h7M19 400.2h4M846 400.2h-4M429 411.4h7M19 411.4h4M846 411.4h-4M429 422.5h7M19 422.5h6M846 422.5h-6M429 433.6h7M19 433.6h4M846 433.6h-4M429 444.8h7M19 444.8h4M846 444.8h-4M429 455.9h7M19 455.9h4M846 455.9h-4M429 467.1h7M19 467.1h4M846 467.1h-4M429 478.2h7M19 478.2h6M846 478.2h-6M429 489.4h7M19 489.4h4M846 489.4h-4M429 500.6h7M19 500.6h4M846 500.6h-4M429 511.7h7M19 511.7h4M846 511.7h-4M429 522.9h7M19 522.9h4M846 522.9h-4M429 534h7M19 534h6M846 534h-6M429 545.1h7M19 545.1h4M846 545.1h-4M429 556.3h7M19 556.3h4M846 556.3h-4M429 567.5h7M19 567.5h4M846 567.5h-4M429 578.6h7M19 578.6h4M846 578.6h-4M429 589.8h7M19 589.8h6M846 589.8h-6M429 600.9h7M19 600.9h4M846 600.9h-4M429 612h7M19 612h4M846 612h-4M429 623.2h7M19 623.2h4M846 623.2h-4M429 634.4h7M19 634.4h4M846 634.4h-4"/>
<path stroke="#e4e49c" stroke-width="1.1" fill="none" d="M19 308L20 311L21 313L22 315L23 317L24 319L25 321L26 323L27 325L28 327L29 329L30 331L31 333L32 335L33 336L34 338L35 340L36 342L37 344L38 345L39 347L40 349L41 350L42 352L43 353L44 354L45 356L46 357L47 358L48 359L49 360L50 361L51 362L52 363L53 364L54 364L55 365L56 366L57 366L58 366L59 367L60 367L61 367L62 367L63 367L64 367L65 367L66 367L67 366L68 366L69 366L70 365L71 364L72 364L73 363L74 362L75 361L76 360L77 359L78 358L79 357L80 356L81 354L82 353L83 352L84 350L85 349L86 347L87 345L88 344L89 342L90 340L91 339L92 337L93 335L94 333L95 331L96 329L97 327L98 325L99 323L100 321L101 319L102 317L103 315L104 313L105 311L106 309L107 307L108 305L109 303L110 301L111 299L112 297L113 295L114 293L115 291L116 289L117 287L118 285L119 284L120 282L121 280L122 279L123 277L124 276L125 274L126 273L127 271L128 270L129 269L130 268L131 267L132 266L133 265L134 264L135 263L136 262L137 261L138 261L139 260L140 260L141 260L142 259L143 259L144 259L145 259L146 259L147 259L148 259L149 259L150 260L151 260L152 261L153 261L154 262L155 262L156 263L157 264L158 265L159 266L160 267L161 268L162 269L163 271L164 272L165 273L166 275L167 276L168 278L169 279L170 281L171 283L172 284L173 286L174 288L175 290L176 292L177 294L178 296L179 298L180 300L181 302L182 304L183 306L184 308L185 310L186 312L187 314L188 316L189 318L190 320L191 322L192 324L193 326L194 328L195 330L196 332L197 334L198 336L199 338L200 339L201 341L202 343L203 345L204 346L205 348L206 349L207 351L208 352L209 354L210 355L211 356L212 358L213 359L214 360L215 361L216 362L217 363L218 363L219 364L220 365L221 365L222 366L223 366L224 367L225 367L226 367L227 367L228 367L229 367L230 367L231 367L232 367L233 366L234 366L235 365L236 365L237 364L238 363L239 362L240 362L241 361L242 360L243 359L244 357L245 356L246 355L247 354L248 352L249 351L250 349L251 348L252 346L253 344L254 343L255 341L256 339L257 337L258 336L259 334L260 332L261 330L262 328L263 326L264 324L265 322L266 320L267 318L268 316L269 314L270 312L271 310L272 307L273 305L274 303L275 301L276 299L277 297L278 295L279 293L280 292L281 290L282 288L283 286L284 284L285 283L286 281L287 279L288 278L289 276L290 275L291 273L292 272L293 271L294 269L295 268L296 267L297 266L298 265L299 264L300 263L301 262L302 262L303 261L304 261L305 260L306 260L307 259L308 259L309 259L310 259L311 259L312 259L313 259L314 259L315 260L316 260L317 260L318 261L319 262L320 262L321 263L322 264L323 265L324 266L325 267L326 268L327 269L328 270L329 271L330 273L331 274L332 276L333 277L334 279L335 280L336 282L337 284L338 286L339 287L340 289L341 291L342 293L343 295L344 297L345 299L346 301L347 303L348 305L349 307L350 309L351 311L352 313L353 315L354 317L355 319L356 321L357 323L358 325L359 327L360 329L361 331L362 333L363 335L364 337L365 339L366 340L367 342L368 344L369 346L370 347L371 349L372 350L373 352L374 353L375 355L376 356L377 357L378 358L379 359L380 360L381 361L382 362L383 363L384 364L385 364L386 365L387 366L388 366L389 366L390 367L391 367L392 367L393 367L394 367L395 367L396 367L397 367L398 366L399 366L400 365L401 365L402 364L403 364L404 363L405 362L406 361L407 360L408 359L409 358L410 357L411 355L412 354L413 353L414 351L415 350L416 348L417 347L418 345L419 343L420 342L421 340L422 338L423 336L424 334L425 333L426 331L427 329L428 327L429 325L430 323L431 321L432 319L433 316L434 314L435 312L436 310L437 308L438 306L439 304L440 302L441 300L442 298L443 296L444 294L445 292L446 290L447 289L448 287L449 285L450 283L451 282L452 280L453 278L454 277L455 275L456 274L457 272L458 271L459 270L460 269L461 267L462 266L463 265L464 264L465 264L466 263L467 262L468 261L469 261L470 260L471 260L472 259L473 259L474 259L475 259L476 259L477 259L478 259L479 259L480 259L481 260L482 260L483 261L484 261L485 262L486 263L487 263L488 264L489 265L490 266L491 267L492 268L493 270L494 271L495 272L496 274L497 275L498 277L499 278L500 280L501 281L502 283L503 285L504 287L505 288L506 290L507 292L508 294L509 296L510 298L511 300L512 302L513 304L514 306L515 308L516 310L517 312L518 314L519 316L520 318L521 320L522 322L523 324L524 326L525 328L526 330L527 332L528 334L529 336L530 338L531 340L532 342L533 343L534 345L535 347L536 348L537 350L538 351L539 353L540 354L541 355L542 357L543 358L544 359L545 360L546 361L547 362L548 363L549 364L550 364L551 365L552 365L553 366L554 366L555 367L556 367L557 367L558 367L559 367L560 367L561 367L562 367L563 366L564 366L565 366L566 365L567 365L568 364L569 363L570 362L571 361L572 360L573 359L574 358L575 357L576 356L577 355L578 353L579 352L580 350L581 349L582 347L583 346L584 344L585 342L586 341L587 339L588 337L589 335L590 333L591 331L592 329L593 327L594 325L595 323L596 321L597 319L598 317L599 315L600 313L601 311L602 309L603 307L604 305L605 303L606 301L607 299L608 297L609 295L610 293L611 291L612 289L613 287L614 286L615 284L616 282L617 281L618 279L619 277L620 276L621 274L622 273L623 272L624 270L625 269L626 268L627 267L628 266L629 265L630 264L631 263L632 262L633 262L634 261L635 260L636 260L637 260L638 259L639 259L640 259L641 259L642 259L643 259L644 259L645 259L646 260L647 260L648 260L649 261L650 262L651 262L652 263L653 264L654 265L655 266L656 267L657 268L658 269L659 270L660 272L661 273L662 274L663 276L664 277L665 279L666 281L667 282L668 284L669 286L670 288L671 290L672 291L673 293L674 295L675 297L676 299L677 301L678 303L679 305L680 307L681 309L682 311L683 313L684 315L685 318L686 320L687 322L688 324L689 326L690 328L691 330L692 332L693 333L694 335L695 337L696 339L697 341L698 343L699 344L700 346L701 348L702 349L703 351L704 352L705 353L706 355L707 356L708 357L709 358L710 360L711 361L712 362L713 362L714 363L715 364L716 365L717 365L718 366L719 366L720 367L721 367L722 367L723 367L724 367L725 367L726 367L727 367L728 367L729 366L730 366L731 365L732 365L733 364L734 363L735 363L736 362L737 361L738 360L739 359L740 358L741 356L742 355L743 354L744 353L745 351L746 350L747 348L748 346L749 345L750 343L751 341L752 340L753 338L754 336L755 334L756 332L757 330L758 328L759 326L760 324L761 322L762 320L763 318L764 316L765 314L766 312L767 310L768 308L769 306L770 304L771 302L772 300L773 298L774 296L775 294L776 292L777 290L778 288L779 286L780 285L781 283L782 281L783 280L784 278L785 276L786 275L787 273L788 272L789 271L790 270L791 268L792 267L793 266L794 265L795 264L796 263L797 263L798 262L799 261L800 261L801 260L802 260L803 259L804 259L805 259L806 259L807 259L808 259L809 259L810 259L811 259L812 260L813 260L814 261L815 261L816 262L817 263L818 264L819 264L820 265L821 266L822 268L823 269L824 270L825 271L826 273L827 274L828 275L829 277L830 278L831 280L832 282L833 283L834 285L835 287L836 289L837 291L838 293L839 294L840 296L841 298L842 300L843 302L844 304L845 306L846 308"/>
<path stroke="#e6e6e6" stroke-width="1.1" fill="none" d="M19 424L20 426L21 428L22 430L23 432L24 434L25 436L26 438L27 440L28 442L29 444L30 446L31 448L32 450L33 452L34 453L35 455L36 457L37 459L38 460L39 462L40 463L41 465L42 466L43 468L44 469L45 471L46 472L47 473L48 474L49 475L50 476L51 477L52 478L53 479L54 479L55 480L56 480L57 481L58 481L59 482L60 482L61 482L62 482L63 482L64 482L65 482L66 482L67 481L68 481L69 480L70 480L71 479L72 479L73 478L74 477L75 476L76 475L77 474L78 473L79 472L80 471L81 469L82 468L83 467L84 465L85 464L86 462L87 460L88 459L89 457L90 455L91 454L92 452L93 450L94 448L95 446L96 444L97 442L98 440L99 438L100 436L101 434L102 432L103 430L104 428L105 426L106 424L107 422L108 420L109 418L110 416L111 414L112 412L113 410L114 408L115 406L116 404L117 402L118 401L119 399L120 397L121 395L122 394L123 392L124 391L125 389L126 388L127 387L128 385L129 384L130 383L131 382L132 381L133 380L134 379L135 378L136 377L137 377L138 376L139 376L140 375L141 375L142 375L143 374L144 374L145 374L146 374L147 374L148 374L149 375L150 375L151 375L152 376L153 376L154 377L155 378L156 379L157 379L158 380L159 381L160 382L161 383L162 385L163 386L164 387L165 389L166 390L167 392L168 393L169 395L170 396L171 398L172 400L173 401L174 403L175 405L176 407L177 409L178 411L179 413L180 415L181 417L182 419L183 421L184 423L185 425L186 427L187 429L188 431L189 433L190 435L191 437L192 439L193 441L194 443L195 445L196 447L197 449L198 451L199 453L200 454L201 456L202 458L203 460L204 461L205 463L206 464L207 466L208 467L209 469L210 470L211 471L212 472L213 474L214 475L215 476L216 477L217 477L218 478L219 479L220 480L221 480L222 481L223 481L224 481L225 482L226 482L227 482L228 482L229 482L230 482L231 482L232 481L233 481L234 481L235 480L236 480L237 479L238 478L239 477L240 477L241 476L242 475L243 474L244 472L245 471L246 470L247 469L248 467L249 466L250 464L251 463L252 461L253 459L254 458L255 456L256 454L257 452L258 451L259 449L260 447L261 445L262 443L263 441L264 439L265 437L266 435L267 433L268 431L269 429L270 427L271 425L272 423L273 421L274 419L275 416L276 415L277 413L278 411L279 409L280 407L281 405L282 403L283 401L284 399L285 398L286 396L287 394L288 393L289 391L290 390L291 388L292 387L293 386L294 385L295 383L296 382L297 381L298 380L299 379L300 378L301 378L302 377L303 376L304 376L305 375L306 375L307 375L308 374L309 374L310 374L311 374L312 374L313 374L314 375L315 375L316 375L317 376L318 376L319 377L320 377L321 378L322 379L323 380L324 381L325 382L326 383L327 384L328 385L329 387L330 388L331 389L332 391L333 392L334 394L335 396L336 397L337 399L338 401L339 403L340 404L341 406L342 408L343 410L344 412L345 414L346 416L347 418L348 420L349 422L350 424L351 426L352 428L353 430L354 432L355 434L356 436L357 438L358 440L359 442L360 444L361 446L362 448L363 450L364 452L365 454L366 455L367 457L368 459L369 461L370 462L371 464L372 465L373 467L374 468L375 470L376 471L377 472L378 473L379 474L380 475L381 476L382 477L383 478L384 479L385 479L386 480L387 481L388 481L389 481L390 482L391 482L392 482L393 482L394 482L395 482L396 482L397 482L398 481L399 481L400 480L401 480L402 479L403 479L404 478L405 477L406 476L407 475L408 474L409 473L410 472L411 470L412 469L413 468L414 466L415 465L416 463L417 462L418 460L419 458L420 457L421 455L422 453L423 451L424 449L425 448L426 446L427 444L428 442L429 440L430 438L431 436L432 434L433 432L434 430L435 427L436 425L437 423L438 421L439 419L440 417L441 415L442 413L443 411L444 409L445 408L446 406L447 404L448 402L449 400L450 398L451 397L452 395L453 394L454 392L455 390L456 389L457 388L458 386L459 385L460 384L461 383L462 382L463 381L464 380L465 379L466 378L467 377L468 377L469 376L470 376L471 375L472 375L473 374L474 374L475 374L476 374L477 374L478 374L479 374L480 375L481 375L482 375L483 376L484 377L485 377L486 378L487 379L488 380L489 381L490 382L491 383L492 384L493 385L494 386L495 387L496 389L497 390L498 392L499 393L500 395L501 397L502 398L503 400L504 402L505 404L506 405L507 407L508 409L509 411L510 413L511 415L512 417L513 419L514 421L515 423L516 425L517 427L518 429L519 431L520 433L521 435L522 437L523 440L524 441L525 443L526 445L527 447L528 449L529 451L530 453L531 455L532 457L533 458L534 460L535 462L536 463L537 465L538 466L539 468L540 469L541 470L542 472L543 473L544 474L545 475L546 476L547 477L548 478L549 478L550 479L551 480L552 480L553 481L554 481L555 482L556 482L557 482L558 482L559 482L560 482L561 482L562 482L563 481L564 481L565 481L566 480L567 479L568 479L569 478L570 477L571 476L572 475L573 474L574 473L575 472L576 471L577 470L578 468L579 467L580 465L581 464L582 462L583 461L584 459L585 457L586 456L587 454L588 452L589 450L590 448L591 446L592 444L593 442L594 441L595 438L596 436L597 434L598 432L599 430L600 428L601 426L602 424L603 422L604 420L605 418L606 416L607 414L608 412L609 410L610 408L611 406L612 405L613 403L614 401L615 399L616 397L617 396L618 394L619 393L620 391L621 390L622 388L623 387L624 386L625 384L626 383L627 382L628 381L629 380L630 379L631 378L632 378L633 377L634 376L635 376L636 375L637 375L638 375L639 374L640 374L641 374L642 374L643 374L644 374L645 375L646 375L647 375L648 376L649 376L650 377L651 378L652 378L653 379L654 380L655 381L656 382L657 383L658 384L659 386L660 387L661 388L662 390L663 391L664 393L665 394L666 396L667 398L668 399L669 401L670 403L671 405L672 407L673 408L674 410L675 412L676 414L677 416L678 418L679 420L680 422L681 424L682 426L683 429L684 431L685 433L686 435L687 437L688 439L689 441L690 443L691 445L692 447L693 449L694 450L695 452L696 454L697 456L698 458L699 459L700 461L701 463L702 464L703 466L704 467L705 468L706 470L707 471L708 472L709 473L710 474L711 476L712 476L713 477L714 478L715 479L716 480L717 480L718 481L719 481L720 481L721 482L722 482L723 482L724 482L725 482L726 482L727 482L728 482L729 481L730 481L731 480L732 480L733 479L734 478L735 478L736 477L737 476L738 475L739 474L740 473L741 471L742 470L743 469L744 467L745 466L746 465L747 463L748 461L749 460L750 458L751 456L752 455L753 453L754 451L755 449L756 447L757 445L758 443L759 441L760 439L761 437L762 435L763 433L764 431L765 429L766 427L767 425L768 423L769 421L770 419L771 417L772 415L773 413L774 411L775 409L776 407L777 405L778 403L779 402L780 400L781 398L782 396L783 395L784 393L785 392L786 390L787 389L788 387L789 386L790 385L791 384L792 382L793 381L794 380L795 379L796 379L797 378L798 377L799 376L800 376L801 375L802 375L803 375L804 374L805 374L806 374L807 374L808 374L809 374L810 374L811 375L812 375L813 376L814 376L815 377L816 377L817 378L818 379L819 380L820 381L821 382L822 383L823 384L824 385L825 386L826 388L827 389L828 391L829 392L830 394L831 395L832 397L833 399L834 400L835 402L836 404L837 406L838 408L839 410L840 412L841 414L842 415L843 418L844 420L845 422L846 424"/>
<path stroke="#f0f070" stroke-width="1.2" d="M145.5 259v-3M63.5 367v3M311.5 259v-3M228.5 367v3M476.5 259v-3M393.5 367v3M641.5 259v-3M559.5 367v3M807.5 259v-3M724.5 367v3"/>
<path stroke="#f0f0f0" stroke-width="1.2" d="M145.5 374v-3M63.5 482v3M311.5 374v-3M228.5 482v3M476.5 374v-3M393.5 482v3M641.5 374v-3M559.5 482v3M807.5 374v-3M724.5 482v3"/>
<path stroke="#b0dfe6" stroke-width="1.1" fill="none" d="M19 476.5H22V589.3H105V476.5H188V589.3H271V476.5H353.5V589.3H436.5V476.5H519.5V589.3H602.5V476.5H685V589.3H768V476.5H846"/>
<rect x="18.5" y="198.8" width="828" height="446.9" fill="none" stroke="#cfcfcf" stroke-width="1.6"/>
</svg>
<div class="t" style="left:782.9px;top:213.2px;font-size:9.8px;font-weight:bold;color:#b8e6de">1.00000KHz</div>
<!-- left markers -->
<svg class="a" style="left:0;top:0" width="20" height="768" viewBox="0 0 20 768">
<path d="M3 303h10l4 4.5l-4 4.5h-10z" fill="#f0f048"/>
<text x="8" y="311" font-size="8" fill="#222" font-family="Liberation Sans" text-anchor="middle">1</text>
<path d="M3 419h10l4 4.5l-4 4.5h-10z" fill="#f4f4f4"/>
<text x="8.5" y="427" font-size="8" fill="#333" font-family="Liberation Sans" text-anchor="middle">R</text>
<path d="M3 527h10l4 4.5l-4 4.5h-10z" fill="#a6f0ee"/>
<text x="8.5" y="535" font-size="8.5" font-weight="bold" fill="#1d4a48" font-family="Liberation Sans" text-anchor="middle">2</text>
</svg>
<svg class="a" style="left:848px;top:308px" width="15" height="11" viewBox="0 0 15 11"><path d="M0.5 5.5l4.5-5h9.5v10h-9.5z" fill="#f0f050"/><text x="9" y="9" font-size="8.5" fill="#333" font-family="Liberation Sans" text-anchor="middle">T</text></svg>
<!-- bottom labels -->
<div class="a" style="left:19px;top:649.5px;width:75.5px;height:15.2px;background:#000"></div>
<div class="t" style="left:20.7px;top:652.4px;font-size:10px;color:#dcdc9a;-webkit-text-stroke:0.3px #dcdc9a">CH1</div>
<svg class="a" style="left:42px;top:652.8px" width="10" height="8" viewBox="0 0 10 8"><path d="M1.2 5.5c0.8-3.5 2.2-3.5 3.3-1s2.5 3 3.5-1" fill="none" stroke="#c8c890" stroke-width="1"/></svg>
<div class="t" style="left:56.2px;top:652.4px;font-size:10px;color:#dcdc9a;-webkit-text-stroke:0.3px #dcdc9a">500mV</div>
<div class="a" style="left:108.5px;top:649.5px;width:76.3px;height:15.2px;background:#000"></div>
<div class="a" style="left:109.7px;top:650.9px;width:22.6px;height:12.3px;background:#a8eef6"></div>
<div class="t" style="left:111.2px;top:652.4px;font-size:10px;color:#22606a">CH2</div>
<svg class="a" style="left:133px;top:652.8px" width="10" height="8" viewBox="0 0 10 8"><path d="M1.2 5.5c0.8-3.5 2.2-3.5 3.3-1s2.5 3 3.5-1" fill="none" stroke="#b8d8dc" stroke-width="1"/></svg>
<div class="t" style="left:146.7px;top:652.4px;font-size:10px;color:#c4dde2;-webkit-text-stroke:0.2px #c4dde2">500mV</div>
<div class="a" style="left:771.7px;top:649.5px;width:73.7px;height:15.3px;background:#000"></div>
<div class="t" style="left:774.3px;top:652.4px;font-size:10.2px;color:#d88b55;-webkit-text-stroke:0.2px #d88b55">Time: 500.0us</div>
<!-- right panel -->
<div class="a" style="left:863px;top:161px;width:159px;height:506px;background:#f0f0f0"></div>
<div class="a" style="left:863px;top:161px;width:159px;height:1px;background:#d8d8d8"></div>
<div class="t" style="left:873.8px;top:169.8px;font-size:9px;color:#333">Connect:</div>
<div class="a" style="left:912px;top:165.5px;width:18px;height:18px;border-radius:50%;background:#a9a9a9;border:1px solid #8c8c8c"></div>
<div class="a" style="left:865px;top:185.5px;width:157px;height:1px;background:#e0e0e0"></div>
<div class="a" style="left:865px;top:185.5px;width:1px;height:482px;background:#e4e4e4"></div>
<!-- scrollbar -->
<svg class="a" style="left:1012px;top:190px" width="10" height="8" viewBox="0 0 10 8"><path d="M2 5.5l3-3l3 3" fill="none" stroke="#444" stroke-width="1.2"/></svg>
<div class="a" style="left:1012.5px;top:200px;width:9px;height:349px;background:#a9a9a9"></div>
<!-- Horizontal group -->
<div class="gb" style="left:869.5px;top:195px;width:138px;height:91.5px"></div>
<div class="gbl" style="left:875.5px;top:192px">Horizontal</div>
<div class="lbl" style="left:872px;top:208.9px">Time / DIV</div>
<div class="combo" style="left:872px;top:222.5px;width:56px;height:18px"><span>500.0us</span><i></i></div>
<div class="lbl" style="left:872px;top:246.9px">Format</div>
<div class="combo" style="left:872px;top:263px;width:56px;height:17.5px"><span>Y - T</span><i></i></div>
<svg class="a" style="left:930px;top:200px" width="80" height="80" viewBox="930 200 80 80">
<defs><radialGradient id="ring" cx="0.45" cy="0.35" r="0.7"><stop offset="0" stop-color="#d0d0d0"/><stop offset="0.75" stop-color="#b4b4b4"/><stop offset="1" stop-color="#9c9c9c"/></radialGradient></defs>
<circle cx="968.3" cy="240.9" r="30.7" fill="none" stroke="#6e6e6e" stroke-width="0.9"/>
<circle cx="968.3" cy="241" r="28.6" fill="url(#ring)" stroke="#a4a4a4" stroke-width="0.8"/>
<circle cx="968.3" cy="241.3" r="23.8" fill="#2200c8" stroke="#4a4a7a" stroke-width="0.8"/>
<path d="M972.3 222l-2.9 13" stroke="#c8c0f0" stroke-width="1.3"/>
<path d="M942 266.7l5.2-4.7M993.8 266.7l-5-4.7" stroke="#222" stroke-width="1.3"/>
</svg>
<!-- Vertical group -->
<div class="gb" style="left:869.5px;top:297.5px;width:138px;height:123.5px"></div>
<div class="gbl" style="left:875.5px;top:294px">Vertical</div>
<div class="combo" style="left:872.5px;top:311.5px;width:55.5px;height:17.5px"><span>CH2</span><i></i></div>
<div class="a" style="left:932px;top:312.5px;width:11px;height:11px;border:1px solid #333;background:#fff"></div>
<svg class="a" style="left:932px;top:312.5px" width="11" height="11" viewBox="0 0 11 11"><path d="M2 5.5l2.5 2.8l4.7-6" fill="none" stroke="#222" stroke-width="1.1"/></svg>
<div class="lbl" style="left:945.6px;top:314px;letter-spacing:-0.5px">ON/OFF</div>
<div class="a" style="left:872.5px;top:334px;width:55.5px;height:17.5px;background:#fff;border:1px solid #b8b8b8"></div>
<div class="lbl" style="left:875.5px;top:338.6px">500mV</div>
<div class="a" style="left:914px;top:335px;width:13px;height:15.5px;background:#f0f0f0;border-left:1px solid #d0d0d0"></div>
<svg class="a" style="left:914px;top:335px" width="13" height="16" viewBox="0 0 13 16"><path d="M4 6h5l-2.5-3zM4 10h5l-2.5 3z" fill="#222"/><path d="M1 8h11" stroke="#ccc" stroke-width="0.8"/></svg>
<div class="combo" style="left:872.5px;top:357px;width:55.5px;height:17.5px"><span>AC</span><i></i></div>
<div class="combo" style="left:872.5px;top:380px;width:55.5px;height:17px"><span>x1</span><i></i></div>
<svg class="a" style="left:930px;top:325px" width="80" height="80" viewBox="930 325 80 80">
<circle cx="968.3" cy="364.4" r="30.9" fill="none" stroke="#6e6e6e" stroke-width="0.9"/>
<circle cx="968.3" cy="364.8" r="28.5" fill="url(#ring)" stroke="#a4a4a4" stroke-width="0.8"/>
<circle cx="968.2" cy="365" r="23" fill="#8ef4fb" stroke="#4e9a9a" stroke-width="1.8"/>
<path d="M956.6 349.5l7.8 9.9" stroke="#3a3a3a" stroke-width="1.5"/>
<path d="M942 389.5l5.2-4.7M993.8 389.5l-5-4.7" stroke="#222" stroke-width="1.3"/>
</svg>
<!-- Trigger group -->
<div class="gb" style="left:870px;top:431.5px;width:137.5px;height:197px"></div>
<div class="gbl" style="left:875.5px;top:427.6px">Trigger</div>
<div class="lbl" style="left:872.2px;top:448.5px">Trigger Mode</div>
<div class="lbl" style="left:872.2px;top:473.6px">Trigger Sweep</div>
<div class="lbl" style="left:872.2px;top:498.1px">Trigger Source</div>
<div class="lbl" style="left:872.2px;top:521.8px">Trigger Slope</div>
<div class="combo" style="left:942.7px;top:444px;width:56.5px;height:17.5px"><span>Edge</span><i></i></div>
<div class="combo" style="left:942.7px;top:469px;width:56.5px;height:17px"><span>AUTO</span><i></i></div>
<div class="combo" style="left:942.7px;top:493.5px;width:56.5px;height:17px"><span>CH1</span><i></i></div>
<div class="combo" style="left:942.7px;top:518.5px;width:56.5px;height:18px"><span>+</span><i></i></div>
<!-- move waveform -->
<div class="lbl" style="left:872.8px;top:657.6px">Move Waveform</div>
<div class="a" style="left:938.5px;top:662px;width:63px;height:1px;background:#dcdcdc"></div>
<div class="a" style="left:938px;top:667px;width:56px;height:2px;background:#c8c8c8"></div>

<!-- status bar -->
<div class="a" style="left:0;top:667px;width:1022px;height:17px;background:#f0f0f0"></div>
<div class="t" style="left:2px;top:673.5px;font-size:10.4px;color:#222">Connected</div>
<div class="a" style="left:917px;top:669px;width:105px;height:1px;background:#dcdcdc"></div><div class="a" style="left:917px;top:669px;width:1px;height:15px;background:#d4d4d4"></div>
<div class="t" style="left:921.7px;top:673.6px;font-size:10.4px;color:#2a2a2a">28-04-2016</div><div class="t" style="left:982.9px;top:673.6px;font-size:10.4px;letter-spacing:-0.6px;color:#2a2a2a">10:17</div>
<div class="a" style="left:938px;top:667.3px;width:56px;height:1.5px;background:#c4c4c4"></div>
<svg class="a" style="left:1013px;top:675px" width="8" height="8" viewBox="0 0 8 8"><path d="M6 1h1M4 3h1M6 3h1M2 5h1M4 5h1M6 5h1M0 7h1M2 7h1M4 7h1M6 7h1" stroke="#b8b8b8" stroke-width="1"/></svg>
</body></html>
